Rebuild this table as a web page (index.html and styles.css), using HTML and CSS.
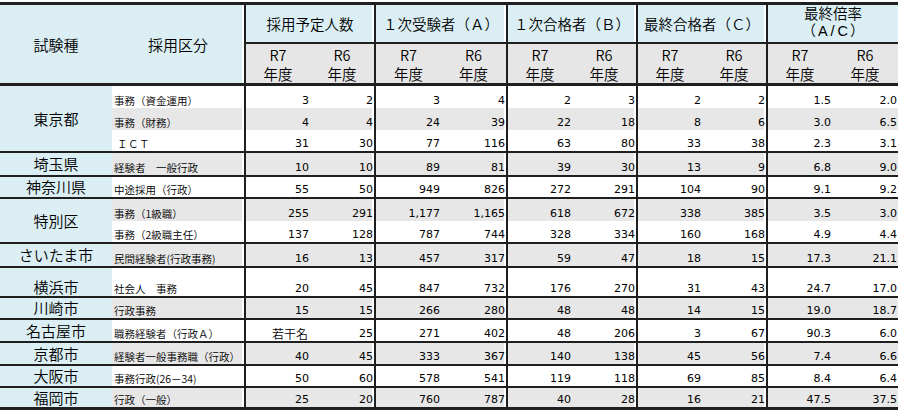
FILE: index.html
```html
<!DOCTYPE html>
<html lang="ja">
<head>
<meta charset="utf-8">
<title>試験結果</title>
<link rel="stylesheet" href="styles.css">
</head>
<body>
<div class="sheet">
  <div class="hd big">試験種</div>
  <div class="hd big br">採用区分</div>
  <div class="hd grp br">採用予定人数</div>
  <div class="hd grp br">１次受験者（Ａ）</div>
  <div class="hd grp br">１次合格者（Ｂ）</div>
  <div class="hd grp br">最終合格者（Ｃ）</div>
  <div class="hd grp two"><span>最終倍率</span><span>（<span class="ac">A/C</span>）</span></div>

  <div class="yr">
    <div>R7<br>年度</div><div>R6<br>年度</div>
    <div>R7<br>年度</div><div>R6<br>年度</div>
    <div>R7<br>年度</div><div>R6<br>年度</div>
    <div>R7<br>年度</div><div>R6<br>年度</div>
    <div>R7<br>年度</div><div>R6<br>年度</div>
  </div>

  <div class="row">
    <div class="nm s3">東京都</div><div class="sb">事務（資金運用）</div>
    <div>3</div><div>2</div><div>3</div><div>4</div><div>2</div><div>3</div><div>2</div><div>2</div><div>1.5</div><div>2.0</div>
  </div>
  <div class="row g">
    <div class="sb">事務（財務）</div>
    <div>4</div><div>4</div><div>24</div><div>39</div><div>22</div><div>18</div><div>8</div><div>6</div><div>3.0</div><div>6.5</div>
  </div>
  <div class="row end">
    <div class="sb ict">ＩＣＴ</div>
    <div>31</div><div>30</div><div>77</div><div>116</div><div>63</div><div>80</div><div>33</div><div>38</div><div>2.3</div><div>3.1</div>
  </div>
  <div class="row g end">
    <div class="nm">埼玉県</div><div class="sb">経験者　一般行政</div>
    <div>10</div><div>10</div><div>89</div><div>81</div><div>39</div><div>30</div><div>13</div><div>9</div><div>6.8</div><div>9.0</div>
  </div>
  <div class="row end">
    <div class="nm">神奈川県</div><div class="sb">中途採用（行政）</div>
    <div>55</div><div>50</div><div>949</div><div>826</div><div>272</div><div>291</div><div>104</div><div>90</div><div>9.1</div><div>9.2</div>
  </div>
  <div class="row g">
    <div class="nm s2">特別区</div><div class="sb">事務（1級職）</div>
    <div>255</div><div>291</div><div>1,177</div><div>1,165</div><div>618</div><div>672</div><div>338</div><div>385</div><div>3.5</div><div>3.0</div>
  </div>
  <div class="row end">
    <div class="sb">事務（2級職主任）</div>
    <div>137</div><div>128</div><div>787</div><div>744</div><div>328</div><div>334</div><div>160</div><div>168</div><div>4.9</div><div>4.4</div>
  </div>
  <div class="row g end">
    <div class="nm">さいたま市</div><div class="sb">民間経験者(行政事務)</div>
    <div>16</div><div>13</div><div>457</div><div>317</div><div>59</div><div>47</div><div>18</div><div>15</div><div>17.3</div><div>21.1</div>
  </div>
  <div class="row end">
    <div class="nm low">横浜市</div><div class="sb">社会人　事務</div>
    <div>20</div><div>45</div><div>847</div><div>732</div><div>176</div><div>270</div><div>31</div><div>43</div><div>24.7</div><div>17.0</div>
  </div>
  <div class="row g end">
    <div class="nm">川崎市</div><div class="sb">行政事務</div>
    <div>15</div><div>15</div><div>266</div><div>280</div><div>48</div><div>48</div><div>14</div><div>15</div><div>19.0</div><div>18.7</div>
  </div>
  <div class="row end">
    <div class="nm">名古屋市</div><div class="sb">職務経験者（行政Ａ）</div>
    <div class="jp">若干名</div><div>25</div><div>271</div><div>402</div><div>48</div><div>206</div><div>3</div><div>67</div><div>90.3</div><div>6.0</div>
  </div>
  <div class="row g end">
    <div class="nm">京都市</div><div class="sb">経験者一般事務職（行政）</div>
    <div>40</div><div>45</div><div>333</div><div>367</div><div>140</div><div>138</div><div>45</div><div>56</div><div>7.4</div><div>6.6</div>
  </div>
  <div class="row end">
    <div class="nm">大阪市</div><div class="sb">事務行政(26－34)</div>
    <div>50</div><div>60</div><div>578</div><div>541</div><div>119</div><div>118</div><div>69</div><div>85</div><div>8.4</div><div>6.4</div>
  </div>
  <div class="row g end last">
    <div class="nm">福岡市</div><div class="sb">行政（一般）</div>
    <div>25</div><div>20</div><div>760</div><div>787</div><div>40</div><div>28</div><div>16</div><div>21</div><div>47.5</div><div>37.5</div>
  </div>
</div>
</body>
</html>
```

FILE: styles.css
```css
* {
  box-sizing: border-box;
  margin: 0;
  padding: 0;
}

body {
  margin: 0;
  background: #ffffff;
  color: #000000;
  font-family: "Noto Sans CJK JP", "Noto Sans", sans-serif;
  font-weight: 350;
}

.sheet {
  margin-top: 2px;
  width: 898px;
  display: grid;
  grid-template-columns: 112px 134px 64px 66px 65px 67px 64px 66px 64px 66px 64px 66px;
  grid-template-rows: 39px 42px 22px 22px 23px 24px 22px 22px 23px 24px 30px 22px 23px 23px 22px 22px;
  border-top: 3px solid #1f1f1f;
}

/* header, first line */
.hd {
  background: #daeef3;
  display: flex;
  align-items: center;
  justify-content: center;
  text-align: center;
  font-size: 14.5px;
  line-height: 17px;
  border-bottom: 2px solid #1f1f1f;
}

.hd.big {
  grid-row: span 2;
  font-size: 15px;
  border-bottom-width: 3px;
}

.hd.grp {
  grid-column: span 2;
}

.hd.two {
  flex-direction: column;
  font-family: "Liberation Sans", "Noto Sans CJK JP", sans-serif;
  line-height: 17px;
  padding-bottom: 1px;
}

.hd.two > span {
  display: block;
  height: 17px;
}

.ac {
  letter-spacing: 3px;
  margin-left: 2px;
  margin-right: -1px;
}

.br {
  border-right: 2px solid #1f1f1f;
  box-shadow: inset -2px 0 0 #ffffff;
}

/* header, year line */
.yr {
  display: contents;
}

.yr > div {
  background: #e7e6e6;
  display: flex;
  align-items: center;
  justify-content: center;
  text-align: center;
  font-size: 14.5px;
  line-height: 19px;
  border-bottom: 3px solid #1f1f1f;
}

.yr > div:nth-last-child(odd):not(:last-child) {
  border-right: 2px solid #1f1f1f;
}

/* data rows */
.row {
  display: contents;
}

.row > div {
  display: flex;
  align-items: flex-end;
  justify-content: flex-end;
  padding: 0 1px 1px 0;
  font-family: "DejaVu Sans", "Liberation Sans", sans-serif;
  font-weight: 400;
  font-size: 11px;
  line-height: 13px;
  white-space: nowrap;
}

.row > div:nth-last-child(odd):not(:last-child) {
  border-right: 2px solid #1f1f1f;
  box-shadow: inset -2px 0 0 #ffffff;
}

.row.g > div {
  background: #e7e7e7;
}

.row.end > div {
  border-bottom: 2px solid #1f1f1f;
}

.row.last > div {
  border-bottom-width: 3px;
}

.row > .nm {
  background: #daeef3;
  justify-content: center;
  align-items: center;
  padding: 0;
  font-family: "Noto Sans CJK JP", sans-serif;
  font-weight: 350;
  font-size: 15px;
  line-height: 18px;
  border-bottom: 2px solid #1f1f1f;
}

.row.g > .nm {
  background: #daeef3;
}

.row > .nm.low {
  align-items: flex-end;
}

.s3 {
  grid-row: span 3;
}

.s2 {
  grid-row: span 2;
}

.row > .sb {
  justify-content: flex-start;
  padding-left: 2px;
  font-family: "Noto Sans CJK JP", sans-serif;
  font-weight: 350;
  font-size: 10.5px;
}

.row > .sb.ict {
  padding-left: 5px;
  letter-spacing: 0.5px;
}

.row > .jp {
  font-family: "Noto Sans CJK JP", sans-serif;
  font-weight: 350;
  font-size: 12px;
  padding-right: 2px;
}
```
